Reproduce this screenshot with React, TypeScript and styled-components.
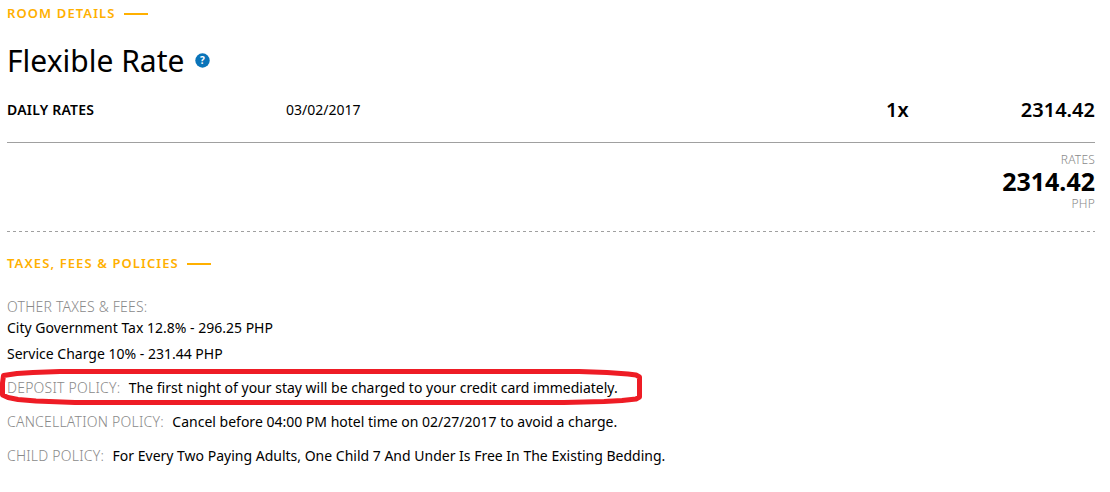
import React from 'react'
import styled, { createGlobalStyle } from 'styled-components'

const COLORS = {
  accent: '#ffb000',
  text: '#000000',
  hint: '#8a8a8a',
  line: '#a0a0a0',
  help: '#0a74b9',
  highlight: '#ee1c25',
}

const GlobalStyle = createGlobalStyle`
  body {
    margin: 0;
    background: #fff;
    font-family: 'Noto Sans', sans-serif;
    color: ${COLORS.text};
  }
`

type SpacingProps = { $top?: string }

const Page = styled.main`
  box-sizing: border-box;
  width: 1110px;
  height: 492px;
  padding: 4px 15px 0 7px;
  overflow: hidden;
`

const SectionTitle = styled.h2<SpacingProps>`
  display: flex;
  align-items: center;
  gap: 8px;
  height: 18px;
  margin: ${(props) => props.$top || '0'} 0 0;
  font-size: 13px;
  font-weight: 600;
  letter-spacing: 1.1px;
  white-space: nowrap;
  color: ${COLORS.accent};

  &::after {
    content: '';
    width: 24px;
    height: 2px;
    margin-top: 2px;
    background: ${COLORS.accent};
  }
`

const RateHeader = styled.div`
  display: flex;
  align-items: center;
  gap: 11px;
  height: 42px;
  margin-top: 18px;
`

const RateName = styled.h1`
  margin: 0;
  font-size: 30px;
  font-weight: 400;
  line-height: 42px;
`

const HelpIcon = styled.svg`
  width: 15px;
  height: 15px;
  margin-bottom: 2px;
`

const DailyRates = styled.div`
  display: grid;
  grid-template-columns: 279px 600px 1fr auto;
  align-items: center;
  box-sizing: border-box;
  height: 61px;
  padding-bottom: 5px;
  border-bottom: 1px solid ${COLORS.line};
  font-size: 14px;
`

const RowLabel = styled.span`
  font-weight: 600;
  letter-spacing: 0.22px;
`

const Amount = styled.span`
  font-size: 20px;
  font-weight: 600;
`

const Total = styled.div`
  display: flex;
  flex-direction: column;
  align-items: flex-end;
  box-sizing: border-box;
  height: 89px;
  padding-top: 8px;
`

const TotalCaption = styled.span`
  font-size: 12px;
  line-height: 17px;
  font-weight: 300;
  letter-spacing: 0.2px;
  color: ${COLORS.hint};
`

const TotalAmount = styled.strong`
  font-size: 25px;
  font-weight: 700;
  line-height: 27px;
`

const DashedLine = styled.div`
  height: 1px;
  margin-top: -1px;
  background: repeating-linear-gradient(to right, ${COLORS.line} 0 3px, transparent 3px 6px);
`

const FeesTitle = styled.div`
  margin-top: 25px;
  font-size: 14px;
  line-height: 20px;
  font-weight: 300;
  letter-spacing: 0.2px;
  color: ${COLORS.hint};
`

const Fee = styled.div`
  height: 26px;
  font-size: 14px;
  line-height: 22px;
`

const Policies = styled.div`
  padding-top: 8px;
`

const Policy = styled.div`
  position: relative;
  display: flex;
  gap: 8.5px;
  height: 34px;
  font-size: 14px;
  line-height: 22px;
  white-space: nowrap;
`

const PolicyName = styled.span`
  font-weight: 300;
  letter-spacing: 0.22px;
  color: ${COLORS.hint};
`

const Highlight = styled.svg`
  position: absolute;
  left: -7px;
  top: -8px;
  width: 645px;
  height: 38px;
  overflow: visible;
`

const FEES = ['City Government Tax 12.8% - 296.25 PHP', 'Service Charge 10% - 231.44 PHP']

const POLICIES = [
  {
    name: 'DEPOSIT POLICY:',
    text: 'The first night of your stay will be charged to your credit card immediately.',
    highlighted: true,
  },
  {
    name: 'CANCELLATION POLICY:',
    text: 'Cancel before 04:00 PM hotel time on 02/27/2017 to avoid a charge.',
  },
  {
    name: 'CHILD POLICY:',
    text: 'For Every Two Paying Adults, One Child 7 And Under Is Free In The Existing Bedding.',
  },
]

const App = () => (
  <>
    <GlobalStyle />
    <Page>
      <SectionTitle>ROOM DETAILS</SectionTitle>
      <RateHeader>
        <RateName>Flexible Rate</RateName>
        <HelpIcon viewBox="0 0 15 15">
          <circle cx="7.5" cy="7.5" r="7.2" fill={COLORS.help} />
          <text x="7.5" y="10.6" textAnchor="middle" fontSize="10" fontWeight="700" fill="#fff">
            ?
          </text>
        </HelpIcon>
      </RateHeader>
      <DailyRates>
        <RowLabel>DAILY RATES</RowLabel>
        <span>03/02/2017</span>
        <Amount>1x</Amount>
        <Amount>2314.42</Amount>
      </DailyRates>
      <Total>
        <TotalCaption>RATES</TotalCaption>
        <TotalAmount>2314.42</TotalAmount>
        <TotalCaption>PHP</TotalCaption>
      </Total>
      <DashedLine />
      <SectionTitle $top="22px">TAXES, FEES &amp; POLICIES</SectionTitle>
      <FeesTitle>OTHER TAXES &amp; FEES:</FeesTitle>
      {FEES.map((fee) => (
        <Fee key={fee}>{fee}</Fee>
      ))}
      <Policies>
        {POLICIES.map((policy) => (
          <Policy key={policy.name}>
            <PolicyName>{policy.name}</PolicyName>
            <span>{policy.text}</span>
            {policy.highlighted && (
              <Highlight viewBox="0 0 645 38" fill="none">
                <path
                  d="M3.5 6.5 L17 4.5 L33 3.5 L60 2.5 L579 2.5 L607 3.5 L628 5 L636 6 L639.5 8 L639.5 28 L636 30 L622 31.5 L604 32.5 L564 33.5 L75 33.5 L36 32 L18 30.5 L8 28.5 L2.5 26 L2.5 14 Z"
                  stroke={COLORS.highlight}
                  strokeWidth="5"
                  strokeLinejoin="round"
                />
              </Highlight>
            )}
          </Policy>
        ))}
      </Policies>
    </Page>
  </>
)

export default App
